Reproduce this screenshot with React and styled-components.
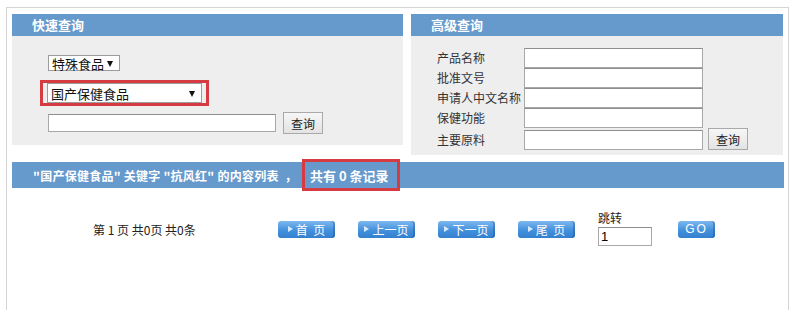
import React from 'react';
import styled, { createGlobalStyle } from 'styled-components';

const GlobalStyle = createGlobalStyle`
  html, body {
    margin: 0;
    padding: 0;
    background: #ffffff;
    overflow: hidden;
  }
  body {
    font-family: "Noto Sans CJK SC", "Liberation Sans", sans-serif;
    font-size: 12px;
    color: #222;
  }
`;

const Page = styled.div`
  padding: 7px 7px 0 6px;
`;

const Frame = styled.div`
  border: 1px solid #d4d4d4;
  border-bottom: none;
  height: 303px;
  padding: 6px 4px 0 5px;
  box-sizing: border-box;
  overflow: hidden;
`;

const PanelRow = styled.div`
  display: flex;
  align-items: flex-start;
  gap: 8px;
`;

const Panel = styled.div`
  width: ${(p) => p.$width}px;
  flex-shrink: 0;
`;

const PanelHead = styled.div`
  height: 22px;
  background: #6699cc;
  color: #fff;
  font-weight: bold;
  font-size: 13px;
  line-height: 22px;
  padding-left: 20px;
`;

const PanelBody = styled.div`
  background: #eeeeef;
  height: ${(p) => p.$height}px;
  box-sizing: border-box;
  padding: ${(p) => p.$pad};
`;

const QuickCol = styled.div`
  display: flex;
  flex-direction: column;
  align-items: flex-start;
`;

const FakeSelect = styled.div`
  display: flex;
  align-items: center;
  justify-content: space-between;
  width: ${(p) => p.$width}px;
  height: ${(p) => p.$height}px;
  box-sizing: border-box;
  border: 1px solid #9c9c9c;
  background: #fff;
  font-size: 13px;
  line-height: 1;
  padding: 0 6px 0 3px;
  color: #111;
  white-space: nowrap;
`;

const Arrow = styled.span`
  width: 0;
  height: 0;
  border-left: 3.5px solid transparent;
  border-right: 3.5px solid transparent;
  border-top: 6px solid #111;
  margin-top: 1px;
`;

const Highlight = styled.div`
  border: 3px solid #d63b42;
  padding: ${(p) => p.$pad};
  margin: ${(p) => p.$margin};
  box-sizing: border-box;
`;

const InputRow = styled.div`
  display: flex;
  align-items: ${(p) => p.$align || 'center'};
  gap: ${(p) => p.$gap || 0}px;
  margin-top: ${(p) => p.$mt || 0}px;
`;

const TextInput = styled.input`
  width: ${(p) => p.$width}px;
  height: ${(p) => p.$height}px;
  box-sizing: border-box;
  border: 1px solid #a8a8a8;
  border-top-color: #8e8e8e;
  background: #fff;
  padding: 0 2px;
  margin: 0;
  font-family: "Liberation Sans", sans-serif;
  font-size: 13px;
  outline: none;
`;

const GreyButton = styled.button`
  width: 40px;
  height: 22px;
  box-sizing: border-box;
  border: 1px solid #a9a9a9;
  background: linear-gradient(#f6f6f6, #e3e3e3);
  font-family: "Noto Sans CJK SC", sans-serif;
  font-size: 12px;
  color: #222;
  padding: 0;
  margin: 0;
`;

const FieldLabel = styled.span`
  width: 87px;
  font-size: 12px;
  color: #333;
  line-height: 20px;
  white-space: nowrap;
`;

const ResultBar = styled.div`
  margin-top: 7px;
  height: 26px;
  background: #6699cc;
  display: flex;
  align-items: center;
  padding-left: 21px;
  color: #fff;
  font-weight: bold;
  font-size: 12px;
  letter-spacing: 0.25px;
  white-space: pre;
`;

const Count = styled.span`
  display: inline-flex;
  align-items: center;
  height: 32px;
  box-sizing: border-box;
  border: 3px solid #d63b42;
  padding: 0 8px 0 5px;
  margin-left: 5px;
  font-size: 13px;
  letter-spacing: 0;
`;

const Pager = styled.div`
  display: flex;
  align-items: center;
  height: 40px;
  margin-top: 21px;
  padding-left: 81px;
`;

const PageInfo = styled.span`
  width: 185px;
  font-size: 12px;
  color: #222;
`;

const BlueButton = styled.div`
  width: ${(p) => p.$width || 57}px;
  height: 17px;
  margin-right: ${(p) => p.$mr || 23}px;
  border-radius: 3px;
  background: linear-gradient(#7db8ee, #4390dc 55%, #3480cf);
  color: #fff;
  font-size: 12px;
  line-height: 17px;
  display: flex;
  align-items: center;
  justify-content: center;
  gap: 3px;
  box-shadow: inset -2px 0 0 rgba(20, 60, 120, 0.3);
  white-space: pre;
  font-family: ${(p) => (p.$latin ? '"Liberation Sans", sans-serif' : 'inherit')};
  letter-spacing: ${(p) => (p.$latin ? '2px' : '0')};
`;

const Tri = styled.span`
  width: 0;
  height: 0;
  border-top: 3px solid transparent;
  border-bottom: 3px solid transparent;
  border-left: 5px solid #d6ebff;
`;

const Jump = styled.div`
  display: flex;
  flex-direction: column;
  margin-right: 26px;
  margin-top: -2px;
`;

const JumpLabel = styled.span`
  font-size: 12px;
  line-height: 15px;
  margin-bottom: 2px;
`;

const pagerButtons = ['首  页', '上一页', '下一页', '尾  页'];

export default function App() {
  return (
    <>
      <GlobalStyle />
      <Page>
        <Frame>
          <PanelRow>
            <Panel $width={391}>
              <PanelHead>快速查询</PanelHead>
              <PanelBody $height={109} $pad="19px 0 0 36px">
                <QuickCol>
                  <FakeSelect $width={72} $height={16}>
                    特殊食品<Arrow />
                  </FakeSelect>
                  <Highlight $pad="0 4px" $margin="9px 0 0 -8px">
                    <FakeSelect $width={155} $height={20}>
                      国产保健食品<Arrow />
                    </FakeSelect>
                  </Highlight>
                  <InputRow $gap={7} $mt={6}>
                    <TextInput $width={228} $height={18} />
                    <GreyButton>查询</GreyButton>
                  </InputRow>
                </QuickCol>
              </PanelBody>
            </Panel>
            <Panel $width={372}>
              <PanelHead>高级查询</PanelHead>
              <PanelBody $height={119} $pad="12px 0 0 26px">
                {['产品名称', '批准文号', '申请人中文名称', '保健功能'].map((l) => (
                  <InputRow key={l}>
                    <FieldLabel>{l}</FieldLabel>
                    <TextInput $width={179} $height={20} />
                  </InputRow>
                ))}
                <InputRow $align="flex-end" $gap={5}>
                  <FieldLabel>主要原料</FieldLabel>
                  <InputRow $align="flex-end" $gap={5} style={{ marginLeft: -5 }}>
                    <TextInput $width={179} $height={20} />
                    <GreyButton>查询</GreyButton>
                  </InputRow>
                </InputRow>
              </PanelBody>
            </Panel>
          </PanelRow>
          <ResultBar>
            {'"国产保健食品" 关键字 "抗风红" 的内容列表  ，'}
            <Count>共有 0 条记录</Count>
          </ResultBar>
          <Pager>
            <PageInfo>第 1 页 共0页 共0条</PageInfo>
            {pagerButtons.map((b) => (
              <BlueButton key={b}>
                <Tri />
                {b}
              </BlueButton>
            ))}
            <Jump>
              <JumpLabel>跳转</JumpLabel>
              <TextInput $width={54} $height={19} defaultValue="1" />
            </Jump>
            <BlueButton $width={37} $latin>GO</BlueButton>
          </Pager>
        </Frame>
      </Page>
    </>
  );
}
